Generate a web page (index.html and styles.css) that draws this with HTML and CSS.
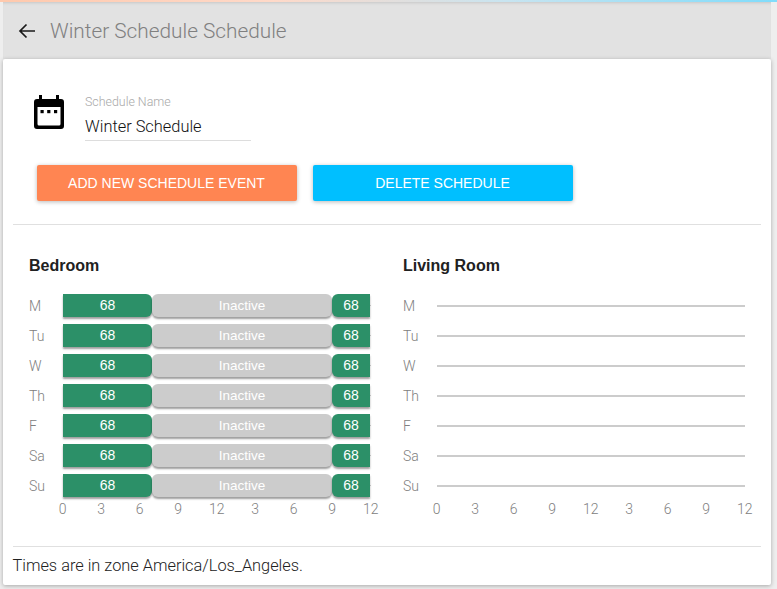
FILE: index.html
```html
<!DOCTYPE html>
<html lang="en">
<head>
<meta charset="utf-8">
<title>Winter Schedule Schedule</title>
<link rel="stylesheet" href="styles.css">
</head>
<body>
<div class="topstrip"></div>
<header class="header">
  <svg class="back" viewBox="0 0 18 16" width="18" height="16" aria-hidden="true"><path d="M17 8H2M8.500 1.500 2 8l6.500 6.500" fill="none" stroke="#1a1a1a" stroke-width="1.700"/></svg>
  <h1 class="title">Winter Schedule Schedule</h1>
</header>
<main class="card">
  <section class="name-row">
    <svg class="cal" viewBox="0 0 30 34" width="30" height="34" aria-hidden="true">
      <path fill="#000" d="M5 0h3v4h14V0h3v4h2a3 3 0 0 1 3 3v24a3 3 0 0 1-3 3H3a3 3 0 0 1-3-3V7a3 3 0 0 1 3-3h2z"/>
      <path fill="#fff" d="M3.500 12h23v17a1.500 1.500 0 0 1-1.500 1.500H5A1.500 1.500 0 0 1 3.500 29z"/>
      <rect x="6.500" y="15" width="3.200" height="3.200"/><rect x="13.200" y="15" width="3.200" height="3.200"/><rect x="20" y="15" width="3.200" height="3.200"/>
    </svg>
    <div class="field">
      <div class="field-label">Schedule Name</div>
      <div class="field-value">Winter Schedule</div>
    </div>
  </section>
  <section class="actions">
    <button class="btn btn-add">ADD NEW SCHEDULE EVENT</button>
    <button class="btn btn-del">DELETE SCHEDULE</button>
  </section>
  <hr class="rule">
  <section class="charts">
    <div class="chart">
      <h2 class="room">Bedroom</h2>
      <div class="row"><span class="day">M</span><div class="plot"><span class="seg on first">68</span><span class="seg off">Inactive</span><span class="seg on last">68</span><i class="tail"></i></div></div>
      <div class="row"><span class="day">Tu</span><div class="plot"><span class="seg on first">68</span><span class="seg off">Inactive</span><span class="seg on last">68</span><i class="tail"></i></div></div>
      <div class="row"><span class="day">W</span><div class="plot"><span class="seg on first">68</span><span class="seg off">Inactive</span><span class="seg on last">68</span><i class="tail"></i></div></div>
      <div class="row"><span class="day">Th</span><div class="plot"><span class="seg on first">68</span><span class="seg off">Inactive</span><span class="seg on last">68</span><i class="tail"></i></div></div>
      <div class="row"><span class="day">F</span><div class="plot"><span class="seg on first">68</span><span class="seg off">Inactive</span><span class="seg on last">68</span><i class="tail"></i></div></div>
      <div class="row"><span class="day">Sa</span><div class="plot"><span class="seg on first">68</span><span class="seg off">Inactive</span><span class="seg on last">68</span><i class="tail"></i></div></div>
      <div class="row"><span class="day">Su</span><div class="plot"><span class="seg on first">68</span><span class="seg off">Inactive</span><span class="seg on last">68</span><i class="tail"></i></div></div>
      <div class="axis"><span>0</span><span>3</span><span>6</span><span>9</span><span>12</span><span>3</span><span>6</span><span>9</span><span>12</span></div>
    </div>
    <div class="chart">
      <h2 class="room">Living Room</h2>
      <div class="row"><span class="day">M</span><div class="plot"><i class="line"></i></div></div>
      <div class="row"><span class="day">Tu</span><div class="plot"><i class="line"></i></div></div>
      <div class="row"><span class="day">W</span><div class="plot"><i class="line"></i></div></div>
      <div class="row"><span class="day">Th</span><div class="plot"><i class="line"></i></div></div>
      <div class="row"><span class="day">F</span><div class="plot"><i class="line"></i></div></div>
      <div class="row"><span class="day">Sa</span><div class="plot"><i class="line"></i></div></div>
      <div class="row"><span class="day">Su</span><div class="plot"><i class="line"></i></div></div>
      <div class="axis"><span>0</span><span>3</span><span>6</span><span>9</span><span>12</span><span>3</span><span>6</span><span>9</span><span>12</span></div>
    </div>
  </section>
  <hr class="rule">
  <p class="zone">Times are in zone America/Los_Angeles.</p>
</main>
</body>
</html>
```
FILE: styles.css
```css
* { box-sizing: border-box; }
html, body { margin: 0; height: 100%; }
body {
  width: 777px;
  height: 589px;
  overflow: hidden;
  background: #eeeeee;
  font-family: "Liberation Sans", Arial, sans-serif;
  color: #212121;
}
.topstrip {
  height: 2px;
  background: linear-gradient(90deg, #ffc9ad 0%, #ffd9c8 35%, #c8e4f0 65%, #80dcfb 100%);
}
.header {
  margin: 0 6px 0 3px;
  height: 57px;
  background: #e2e2e2;
  box-shadow: inset 0 3px 3px -2px rgba(0,0,0,.12);
  display: flex;
  align-items: center;
  padding: 0 0 0 15px;
  gap: 14px;
}
.back { flex: none; }
.title {
  margin: 0;
  font-family: Roboto, "Liberation Sans", sans-serif;
  font-size: 20.800px;
  font-weight: 300;
  line-height: 24px;
  color: #808080;
}
.card {
  margin: 0 6px 0 3px;
  height: 526px;
  background: #fff;
  border-radius: 2px;
  box-shadow: 0 1px 4px rgba(0,0,0,.3);
  padding: 0 10px;
  display: flex;
  flex-direction: column;
}
.name-row {
  display: flex;
  padding: 36px 0 0 21px;
  gap: 21px;
  height: 106px;
}
.cal { flex: none; }
.field { width: 166px; height: 46px; border-bottom: 1px solid #dddddd; }
.field-label { font-family: Roboto, sans-serif; font-weight: 300; font-size: 12.400px; line-height: 14px; color: #a8a8a8; }
.field-value { margin-top: 8px; font-family: Roboto, sans-serif; font-weight: 300; font-size: 16.400px; line-height: 20px; color: #111111; }
.actions { display: flex; gap: 16px; padding-left: 24px; }
.btn {
  width: 260px;
  height: 36px;
  border: 0;
  border-radius: 2px;
  color: #fff;
  font-family: "Liberation Sans", sans-serif;
  font-size: 14px;
  padding: 0 1px 0 0;
  box-shadow: 0 1px 4px rgba(0,0,0,.28);
}
.btn-add { background: #ff8552; }
.btn-del { background: #00bfff; }
.rule { margin: 0; border: 0; height: 1px; background: #e0e0e0; flex: none; }
.actions + .rule { margin-top: 23px; }
.charts { display: grid; grid-template-columns: 374px 1fr; padding-left: 16px; height: 321px; }
.chart { min-width: 0; }
.room { margin: 32px 0 15px; font-size: 16px; line-height: 18px; font-weight: 700; color: #212121; }
.row { display: flex; height: 30px; align-items: center; }
.day { width: 34px; padding-top: 2px; font-family: Roboto, sans-serif; font-weight: 300; font-size: 14px; color: #808080; }
.plot { position: relative; width: 308px; height: 23px; display: flex; align-items: stretch; }
.seg {
  display: flex;
  align-items: center;
  justify-content: center;
  color: #fff;
  font-size: 13.500px;
  box-shadow: 0 2px 2px rgba(0,0,0,.38);
}
.on { background: #2c9068; font-size: 14px; }
.off { width: 180px; background: #cccccc; border-radius: 6px; }
.first { width: 89px; border-radius: 0 6px 6px 0; }
.last { width: 38px; border-radius: 6px 0 0 6px; }
.tail { width: 1px; height: 1px; margin-top: 11px; background: #bbbbbb; }
.line { display: block; width: 308px; height: 2px; margin-top: 11px; background: #cccccc; }
.axis {
  display: grid;
  grid-template-columns: repeat(9, 38.500px);
  margin: 0 0 0 14.500px;
  font-family: Roboto, sans-serif;
  font-weight: 300;
  font-size: 14px;
  line-height: 18px;
  color: #808080;
  text-align: center;
}
.zone { margin: 9px 0 0 -0.500px; font-family: Roboto, sans-serif; font-weight: 300; font-size: 16.350px; line-height: 19px; color: #212121; }
```
